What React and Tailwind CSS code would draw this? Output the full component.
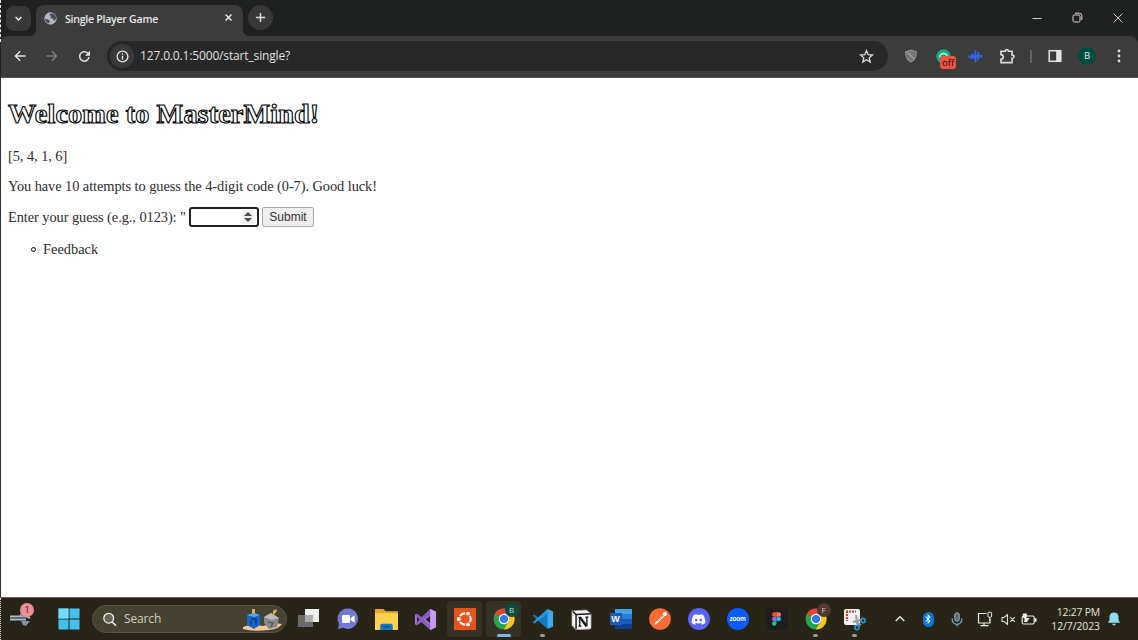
import React from "react";
import { FaDiscord, FaBluetoothB } from "react-icons/fa";

function Svg({ w = 20, h = w, vb = "0 0 24 24", className = "", children, ...rest }) {
  return (
    <svg width={w} height={h} viewBox={vb} fill="none" className={"shrink-0 " + className} {...rest}>
      {children}
    </svg>
  );
}

function Slot({ className = "", children }) {
  return <div className={"flex h-full shrink-0 items-center justify-center " + className}>{children}</div>;
}

function TabStrip() {
  return (
    <div className="flex h-[36px] bg-[#1f2020]">
      <div className="flex w-[36px] items-center pl-[6px]">
        <div className="flex h-[25px] w-[25px] items-center justify-center rounded-[8px] bg-[#383838]">
          <Svg w={9} vb="0 0 10 10"><path d="M1.8 3.4 5 6.6 8.2 3.4" stroke="#eee" strokeWidth="1.6" /></Svg>
        </div>
      </div>
      <div className="relative mt-[5px] flex h-[31px] w-[207px] items-center rounded-t-[8px] bg-[#3c3c3c] pb-[5px] pl-[8px] pr-[10px]">
        <Svg w={7} vb="0 0 7 7" className="absolute bottom-0 left-[-7px]"><path d="M7 0v7H0q7 0 7-7z" fill="#3c3c3c" /></Svg>
        <Svg w={7} vb="0 0 7 7" className="absolute bottom-0 right-[-7px]"><path d="M0 0v7h7q-7 0-7-7z" fill="#3c3c3c" /></Svg>
        <Svg w={13} vb="0 0 14 14">
          <circle cx="7" cy="7" r="6.6" fill="#b4b7c2" />
          <path d="M1.2 7.2 4.4 8l1.8 1.5-.7 3L3 11.3 1.3 9zM7.2 1.6 5.8 3.2l1.8 1.4-.8 1.8 2.7.7 1 2.2 1.5-.5 1.1-3-1.6-3.1-2-1.1z" fill="#484b53" />
        </Svg>
        <div className="ml-[8px] mt-[1px] flex-1 whitespace-nowrap font-['Open_Sans',sans-serif] text-[10.6px] font-semibold leading-[14px] tracking-[-0.27px] text-[#e8e8e8]">Single Player Game</div>
        <Svg w={9} vb="0 0 10 10" className="-mt-px"><path d="m1.7 1.7 6.6 6.6M8.3 1.7 1.7 8.3" stroke="#eee" strokeWidth="1.5" /></Svg>
      </div>
      <div className="ml-[5px] mt-[5px] flex h-[25px] w-[25px] items-center justify-center rounded-full bg-[#383838]">
        <Svg w={11} vb="0 0 10 10"><path d="M5 .8v8.4M.8 5h8.4" stroke="#ddd" strokeWidth="1.3" /></Svg>
      </div>
      <div className="flex-1" />
      <Slot className="w-[40px] pb-px"><Svg w={10} vb="0 0 10 10"><path d="M.5 5.5h9" stroke="#ccc" /></Svg></Slot>
      <Slot className="w-[41px] pb-px">
        <Svg w={11} vb="0 0 11 11">
          <rect x="1" y="3" width="7" height="7" rx="1.3" stroke="#ddd" />
          <path d="M3 1.2h4.4Q9.8 1.2 9.8 3.6V8" stroke="#ddd" />
        </Svg>
      </Slot>
      <Slot className="w-[40px] pb-px"><Svg w={10} vb="0 0 10 10"><path d="m.6.6 8.8 8.8M9.4.6.6 9.4" stroke="#ddd" strokeWidth=".9" /></Svg></Slot>
    </div>
  );
}

function Toolbar() {
  return (
    <div className="flex h-[42px] bg-[#1f2020]">
      <div className="flex h-full w-full items-center rounded-t-[8px] border-b border-[#555] bg-[#3c3c3c] pb-px pl-[4px]">
        <Slot className="w-[32px]"><Svg w={12} vb="0 0 12 12"><path d="M11.5 6H1.6M6.2 1.2 1.4 6l4.8 4.8" stroke="#e4e4e4" strokeWidth="1.4" /></Svg></Slot>
        <Slot className="w-[32px]"><Svg w={12} vb="0 0 12 12"><path d="M.5 6h9.9M5.8 1.2 10.6 6l-4.8 4.8" stroke="#7c7c7c" strokeWidth="1.3" /></Svg></Slot>
        <Slot className="w-[32px]">
          <Svg w={13} vb="0 0 13 13">
            <path d="M11 7.2A4.7 4.7 0 1 1 9.6 3l1.5 1.5" stroke="#e4e4e4" strokeWidth="1.5" />
            <path d="M12 .8v5H7z" fill="#e4e4e4" />
          </Svg>
        </Slot>
        <div className="ml-[7px] flex h-[30px] w-[781px] items-center rounded-full bg-[#282828] pl-[3px] pr-[14px]">
          <div className="flex h-[24px] w-[24px] items-center justify-center rounded-full bg-[#3a3a3a]">
            <Svg w={13} vb="0 0 13 13"><circle cx="6.5" cy="6.5" r="5.4" stroke="#e8e8e8" strokeWidth="1.3" /><path d="M6.5 5.7v4M6.5 3.2v1.5" stroke="#e8e8e8" strokeWidth="1.3" /></Svg>
          </div>
          <div className="ml-[6px] flex-1 whitespace-nowrap font-['Open_Sans',sans-serif] text-[12px] leading-[16px] tracking-[-0.15px] text-[#e2e2e2]">127.0.0.1:5000/start_single?</div>
          <Svg w={15} vb="0 0 24 24"><path d="m12 2.8 2.7 6.3 6.8.6-5.2 4.5 1.6 6.7L12 17.3l-5.9 3.6 1.6-6.7-5.2-4.5 6.8-.6z" stroke="#ddd" strokeWidth="2.1" /></Svg>
        </div>
        <Slot className="ml-[7px] w-[32px]">
          <Svg w={14} vb="0 0 14 14"><path d="M7 .6 12.8 2.4C13 7 11.8 11 7 13.4 2.2 11 1 7 1.2 2.4z" fill="#999" /><path d="M7 2.2 11.3 3.5C11.4 7 10.5 9.8 7 11.8 3.5 9.8 2.6 7 2.7 3.5z" fill="#777" stroke="#555" strokeWidth=".6" /><path d="m3 3.3 7.3 6.5" stroke="#bbb" /></Svg>
        </Slot>
        <Slot className="w-[33px]">
          <div className="relative h-[15px] w-[15px]">
            <Svg w={15} vb="0 0 15 15"><circle cx="7.5" cy="7.5" r="7.2" fill="#14ad86" /><path d="M3.6 8.5a4 4 0 0 1 8 0" stroke="#c9f0e5" strokeWidth="1.5" /></Svg>
            <div className="absolute left-[4px] top-[7px] flex h-[13px] w-[16px] items-center justify-center rounded-[3px] bg-[#ed5541] font-['Open_Sans',sans-serif] text-[9.5px] leading-[11px] text-[#181010]">off</div>
          </div>
        </Slot>
        <Slot className="w-[30px]">
          <Svg w={15} vb="0 0 15 15"><path d="M1.3 7v1.6M4 5.2v3.6L6.4 6v3M7.3 2v8M7.6 12.5V9l2.6-3.2v4.5M10.4 3.4v5.4M13.4 6.5v1.6M3 8h1M10 7.3h3" stroke="#3264e8" strokeWidth="1.8" strokeLinecap="round" /></Svg>
        </Slot>
        <Slot className="w-[34px]">
          <Svg w={17} vb="0 0 17 17"><path d="M2 3.3h4.3C6 1 9.8 1 9.5 3.3H13V7c2.7-.3 2.7 3.5 0 3.2v4.4H2v-3.3c3-.2 3-4.5 0-4.7z" stroke="#dedede" strokeWidth="1.6" /></Svg>
        </Slot>
        <Slot className="w-[14px]"><div className="h-[13px] w-[1.5px] bg-[#656565]" /></Slot>
        <Slot className="w-[33px]"><Svg w={14} vb="0 0 14 14"><rect x="1.2" y="1.7" width="11.6" height="10.6" stroke="#e4e4e4" strokeWidth="1.5" /><path d="M8.2 1.5h4.5v11H8.2z" fill="#e4e4e4" /></Svg></Slot>
        <Slot className="w-[32px]"><div className="flex h-[18px] w-[18px] items-center justify-center rounded-full bg-[#004d40] font-['Open_Sans',sans-serif] text-[9.5px] text-[#e4f0ed]">B</div></Slot>
        <Slot className="w-[32px]"><Svg w={4} h={14} vb="0 0 4 14"><circle cx="2" cy="2" r="1.4" fill="#ddd" /><circle cx="2" cy="7" r="1.4" fill="#ddd" /><circle cx="2" cy="12" r="1.4" fill="#ddd" /></Svg></Slot>
      </div>
    </div>
  );
}

function Page() {
  return (
    <main className="h-[519px] border-l border-[#333] bg-white pl-[7px] font-['Liberation_Serif',serif] text-[14.4px] leading-[18px] text-[#2b2b2b]">
      <h1 className="w-max whitespace-nowrap pt-[19px] text-[28.3px] font-bold leading-[34px] tracking-[0.08px] text-white [-webkit-text-stroke:1.15px_#000]">Welcome to MasterMind!</h1>
      <p className="mt-[16px] w-max tracking-[-0.06px]">[5, 4, 1, 6]</p>
      <p className="mt-[12px] w-max whitespace-nowrap tracking-[-0.07px]">You have 10 attempts to guess the 4-digit code (0-7). Good luck!</p>
      <form className="mt-[12px] flex h-[20px] items-center whitespace-nowrap" onSubmit={(e) => e.preventDefault()}>
        <label className="w-[181px] tracking-[-0.07px]">Enter your guess (e.g., 0123): "</label>
        <div className="flex h-[20px] w-[70px] items-center justify-end rounded-[3px] border-2 border-[#222] bg-white pr-[3px]">
          <div className="flex h-[14px] w-[12px] items-center justify-center bg-[#f0f0f0]">
            <Svg w={8} h={10} vb="0 0 8 10"><path d="M0 4 4 0l4 4zM0 6h8l-4 4z" fill="#4c4c4c" /></Svg>
          </div>
        </div>
        <button className="ml-[3px] h-[20px] w-[52px] rounded-[2px] border border-[#aaa] bg-[#efefef] font-['Liberation_Sans',sans-serif] text-[12px] leading-[18px] text-[#333]">Submit</button>
      </form>
      <ul className="mt-[13px]">
        <li className="flex items-center pl-[23px]">
          <span className="flex w-[12px]"><span className="h-[5px] w-[5px] rounded-full border border-black bg-white" /></span>Feedback
        </li>
      </ul>
    </main>
  );
}

function Chrome({ letter, color }) {
  return (
    <div className="relative h-[22px] w-[22px]">
      <Svg w={22} vb="0 0 22 22">
        <circle cx="11" cy="11" r="10.5" fill="#2aa34e" />
        <path d="M11 11 1.9 5.7A10.5 10.5 0 0 1 20.1 5.7L11 5.7z" fill="#e84436" />
        <path d="M11 5.8h9.2A10.5 10.5 0 0 1 11 21.5l4.6-7.9z" fill="#fbc51c" />
        <circle cx="11" cy="11" r="5.3" fill="#fff" /><circle cx="11" cy="11" r="4" fill="#3379e8" />
      </Svg>
      <div className={"absolute left-[12px] top-[-5px] flex h-[14px] w-[14px] items-center justify-center rounded-full font-['Open_Sans',sans-serif] text-[8px] text-[#c8d5d0] " + color}>{letter}</div>
    </div>
  );
}

function TaskApp({ children, active, mark }) {
  return (
    <div className={"relative mx-[2px] flex h-[36px] w-[35px] shrink-0 items-center justify-center rounded-[4px] " + (active ? "bg-[#363226]" : "")}>
      {children}
      {mark && <div className={"absolute bottom-0 h-[3px] rounded-full " + mark} />}
    </div>
  );
}

function Apps() {
  return (
    <>
      <TaskApp><Svg w={22} vb="0 0 22 22"><path d="M7 1h14v13H7z" fill="#eee" /><path d="M0 7h15v12H0z" fill="#777" fillOpacity=".85" /><path d="M7 7h8v7H7z" fill="#aaa" /></Svg></TaskApp>
      <TaskApp><Svg w={22} vb="0 0 22 22"><path d="M11 .5a10.2 10.2 0 1 1-5 19.2L1 21l1-5A10.2 10.2 0 0 1 11 .5z" fill="#7377d5" /><rect x="5" y="7" width="8" height="8" rx="1.3" fill="#fff" /><path d="m13.6 10 4-2.7v7.4l-4-2.7z" fill="#fff" /></Svg></TaskApp>
      <TaskApp><Svg w={23} vb="0 0 22 22"><path d="M0 1h8l2 2h12v16H0z" fill="#e7a92d" /><path d="M0 5h22v16H0z" fill="#fbd34f" /><path d="M5 21v-4q0-2 2-2h8q2 0 2 2v4z" fill="#1275c8" /><path d="M8 18h6" stroke="#084f8a" strokeWidth="1.3" /></Svg></TaskApp>
      <TaskApp><Svg w={23} vb="0 0 24 24"><path d="m17 1 6 3v16l-6 3-9-8.5L3 18l-2-1V7l2-1 5 3.6z" fill="#a678df" /><path d="M3 9v6l3-3zM17 8v8l-5-4z" fill="#282416" /><path d="m3 6 14 12v5L1 7zM17 1v6L3 18l-2-1z" fill="#7651b5" fillOpacity=".7" /><path d="m17 1 6 3v16l-6 3z" fill="#c79bf0" /></Svg></TaskApp>
      <TaskApp active>
        <Svg w={22} vb="0 0 22 22"><path d="M0 0h22v22H0z" fill="#e8521c" /><circle cx="11" cy="11" r="5.7" stroke="#fff" strokeWidth="2.2" /><g fill="#fff" stroke="#e8521c" strokeWidth="1.1"><circle cx="4.8" cy="11" r="2.5" /><circle cx="14.1" cy="5.6" r="2.5" /><circle cx="14.1" cy="16.4" r="2.5" /></g></Svg>
      </TaskApp>
      <TaskApp active mark="w-[14px] bg-[#7db8e8]"><Chrome letter="B" color="bg-[#084d40]" /></TaskApp>
      <TaskApp mark="w-[5px] bg-[#999]"><Svg w={22} vb="0 0 24 24"><path d="M17 1 6.7 10.5 2.4 7.2.8 8.5 17 23l1-5.5V6z" fill="#127bc2" /><path d="M17 1 1 15.4l1.5 1.4L17 6.2z" fill="#2894db" /><path d="m17 1 6 2.7v16.6L17 23z" fill="#3eabf0" /></Svg></TaskApp>
      <TaskApp><Svg w={21} vb="0 0 22 22"><path d="m1 2 15-1 5 4v15l-1 1-15 .7L1 17z" fill="#f5f5f5" stroke="#aaa" strokeWidth=".7" /><path d="M1.8 2.5 5.3 5.7 20.7 5M5.3 5.7v15.5" stroke="#161616" strokeWidth="1.5" /><path d="M9.2 18V8.8M16.6 18V8.5M7.8 18h3M7.8 8.8h2.6M15 8.5h3.3" stroke="#161616" strokeWidth="1.4" /><path d="m9.5 8.8 6.8 9.2" stroke="#161616" strokeWidth="2.5" /></Svg></TaskApp>
      <TaskApp>
        <div className="relative h-[20px] w-[22px]"><Svg w={22} h={20} vb="0 0 22 20"><path d="M5 0h17v5H5z" fill="#41a5ee" /><path d="M5 5h17v5H5z" fill="#2b7cd3" /><path d="M5 10h17v5H5z" fill="#185abd" /><path d="M5 15h17v5H5z" fill="#103f91" /><path d="M0 4h12v12H0z" fill="#185abd" /></Svg><div className="absolute left-0 top-[4px] w-[12px] text-center font-['Liberation_Sans',sans-serif] text-[9px] font-bold leading-[12px] text-white">W</div></div>
      </TaskApp>
      <TaskApp><Svg w={22} vb="0 0 22 22"><circle cx="11" cy="11" r="10.8" fill="#fb6b36" /><path d="m4.8 17.2 2.4-3.8 6.8-6.1 1.3 1.3-6.4 6.2z" fill="#fff" /><circle cx="16" cy="6" r="2" fill="#fff" /><path d="m7.6 13.8 6.8-6" stroke="#e9582a" strokeWidth=".6" /></Svg></TaskApp>
      <TaskApp><div className="flex h-[22px] w-[22px] items-center justify-center rounded-full bg-[#5865f2]"><FaDiscord size={15} color="white" /></div></TaskApp>
      <TaskApp><div className="flex h-[22px] w-[22px] items-center justify-center rounded-full bg-[#0b5cff] pb-px font-['Liberation_Sans',sans-serif] text-[6.5px] font-bold leading-[8px] tracking-[-0.2px] text-white">zoom</div></TaskApp>
      <TaskApp><div className="flex h-[22px] w-[22px] items-center justify-center bg-[#1e1e20]"><Svg w={9} h={14} vb="0 0 10 15"><path d="M5 0H2.5a2.5 2.5 0 0 0 0 5H5z" fill="#f24e1e" /><path d="M5 0h2.5a2.5 2.5 0 0 1 0 5H5z" fill="#ff7262" /><path d="M5 5H2.5a2.5 2.5 0 0 0 0 5H5z" fill="#a259ff" /><circle cx="7.5" cy="7.5" r="2.5" fill="#1abcfe" /><path d="M5 10H2.5A2.5 2.5 0 1 0 5 12.5z" fill="#0acf83" /></Svg></div></TaskApp>
      <TaskApp mark="w-[5px] bg-[#999]"><Chrome letter="F" color="bg-[#52382f]" /></TaskApp>
      <TaskApp mark="w-[5px] bg-[#999]"><Svg w={23} vb="0 0 23 23"><rect x="1" y="1" width="16" height="16" rx="2" fill="#f1f1f1" /><path d="M3 3.5h10M4 3v10" stroke="#c53b2a" strokeWidth="2.2" strokeDasharray="2 1" /><path d="m13 7 1 8 4 2M10 14l8-2" stroke="#999" strokeWidth="2" /><circle cx="20" cy="12.5" r="2.1" stroke="#219bdc" strokeWidth="1.6" /><circle cx="14" cy="19.5" r="2.1" stroke="#219bdc" strokeWidth="1.6" /></Svg></TaskApp>
    </>
  );
}

function Taskbar() {
  return (
    <footer className="flex h-[43px] items-center border-t border-[#696760] bg-[#282416] font-['Open_Sans',sans-serif]">
      <div className="flex w-[50px] shrink-0 pl-[9px]">
        <div className="relative h-[24px] w-[26px]">
          <Svg w={26} h={24} vb="0 0 26 24"><path d="M1 9.5h17l3 1.5M1 12.5h16" stroke="#aab9cc" strokeWidth="2" /><path d="m10 9 5-7 5 8zM12 14h9l-4 5-3-1z" fill="#8296ad" /></Svg>
          <div className="absolute left-[11px] top-[-4px] flex h-[14px] w-[14px] items-center justify-center rounded-full bg-[#f08c94] text-[9px] leading-[14px] text-[#282020]">1</div>
        </div>
      </div>
      <Slot className="w-[37px]"><Svg w={22} vb="0 0 22 22"><path d="M.5.5h10v10H.5zm11 0h10v10h-10zm-11 11h10v10H.5zm11 0h10v10h-10z" fill="#43c0ef" /><path d="M.5.5h10v10H.5z" fill="#70dcf5" /></Svg></Slot>
      <div className="ml-[5px] flex h-[28px] w-[195px] shrink-0 items-center rounded-full border border-[#555243] bg-[#45422f] pl-[9px] pr-[2px]">
        <Svg w={15} vb="0 0 15 15"><circle cx="6.7" cy="6.2" r="4.9" fill="#66645a" stroke="#eee" strokeWidth="1.3" /><path d="m10 9.8 4 4" stroke="#eee" strokeWidth="1.6" /></Svg>
        <span className="ml-[7px] flex-1 text-[12px] tracking-[-0.15px] text-[#d0cec6]">Search</span>
        <Svg w={42} h={23} vb="0 0 42 23">
          <path d="M1 19q9-4 20-1 10-4 19-2-3 5-13 6-17 2-26-1z" fill="#f2c795" />
          <path d="M10 1h3v6h-3zM31 3l3-2 1 2-4 5z" fill="#e7ae51" />
          <path d="m5 7 7-2 6 2v10l-6 4-7-4z" fill="#1765c8" /><path d="m5 7 7-2 6 2-6 2z" fill="#57acf0" /><path d="M9 11h5v6M9 13v4" stroke="#0b367e" strokeWidth="1.3" />
          <path d="m22 9 7-4 8 5-2 9-8 2-5-6z" fill="#888" /><path d="m22 9 7-4 8 5-7 2z" fill="#bbb" /><path d="m26 14 5 1-2 4" stroke="#555" strokeWidth="1.3" />
        </Svg>
      </div>
      <div className="ml-[2px] flex shrink-0"><Apps /></div>
      <div className="flex h-full flex-1 items-center justify-end">
        <Slot className="w-[26px]"><Svg w={12} vb="0 0 12 12"><path d="m1.7 8 4.3-4.3L10.3 8" stroke="#e6e6e6" strokeWidth="1.4" /></Svg></Slot>
        <Slot className="w-[30px]"><div className="flex h-[15px] w-[11px] items-center justify-center rounded-full bg-[#0878dc]"><FaBluetoothB size={10} color="white" /></div></Slot>
        <Slot className="w-[28px]"><Svg w={12} h={15} vb="0 0 12 15"><rect x="3.8" y=".8" width="4.4" height="8.5" rx="2.2" fill="#526b76" stroke="#9fb7c1" /><path d="M1.2 6.5v1a4.8 4.8 0 0 0 9.6 0v-1M6 12.3v2.2" stroke="#78b2cd" strokeWidth="1.2" /></Svg></Slot>
        <Slot className="w-[28px]"><Svg w={16} vb="0 0 16 16"><path d="M9.5 2.5h-8v9.5H13V8M7 12v2.5M3.5 14.7h8" stroke="#eee" strokeWidth="1.2" /><rect x="11" y="1.2" width="3.6" height="5" rx="1" stroke="#eee" /><path d="M12.8 6v3.8" stroke="#eee" /></Svg></Slot>
        <Slot className="w-[18px]"><Svg w={15} h={13} vb="0 0 15 13"><path d="M1 4.5h2L6.5 1.7v9.6L3 8.5H1zM9.2 4.2l4.6 4.6M13.8 4.2 9.2 8.8" stroke="#ddd" strokeWidth="1.1" /></Svg></Slot>
        <Slot className="w-[24px]"><Svg w={16} h={14} vb="0 0 16 14"><rect x="1.2" y="4" width="12" height="8" rx="1.5" stroke="#eee" strokeWidth="1.2" /><path d="M14 6.2h1.5v3.5H14zM4 6h4.5L6 10H3zM1.8 1.5h4V5l-2 2-2-2z" fill="#eee" /></Svg></Slot>
        <div className="ml-[7px] flex w-[52px] flex-col items-end whitespace-nowrap text-[10.4px] leading-[14px] tracking-[-0.05px] text-[#e6e4de]"><span className="tracking-[-0.2px]">12:27 PM</span><span>12/7/2023</span></div>
        <Slot className="mr-[10px] w-[28px]"><Svg w={14} vb="0 0 14 14"><path d="M7 .6c-3 0-4.5 2-4.5 4.5v3L1 10.8h12L11.5 8V5C11.5 2.6 10 .6 7 .6zM5 11.7h4q-.5 1.8-2 1.8t-2-1.8z" fill="#8edcf4" /></Svg></Slot>
      </div>
    </footer>
  );
}

export default function App() {
  return (
    <div className="relative flex h-[640px] w-[1138px] flex-col overflow-hidden">
      <TabStrip />
      <Toolbar />
      <Page />
      <Taskbar />
      <div className="absolute left-0 top-0 h-[42px] border-l border-dashed border-[#eee]" />
      <div className="absolute left-0 top-[42px] h-[36px] border-l border-[#222]" />
      <div className="absolute bottom-0 left-0 h-[42px] border-l border-dotted border-[#ddd]" />
    </div>
  );
}
